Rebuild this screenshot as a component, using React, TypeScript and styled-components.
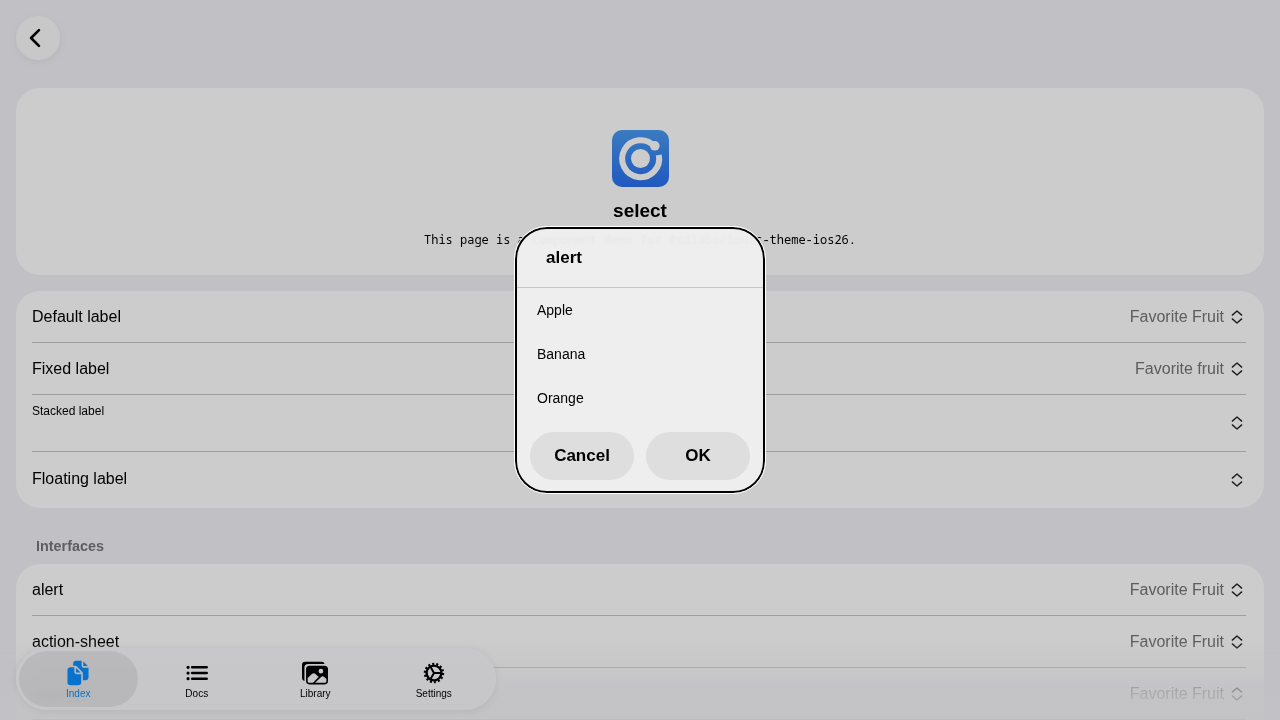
import * as React from 'react';
import styled, { createGlobalStyle } from 'styled-components';
import { IoChevronBack, IoDocuments, IoImages, IoList } from 'react-icons/io5';

const GlobalStyle = createGlobalStyle`
  html, body {
    margin: 0;
    height: 100%;
    overflow: hidden;
    background: #f2f2f7;
    font-family: "Liberation Sans", Arial, sans-serif;
    color: #000;
  }
`;

const Page = styled.div`
  height: 720px;
  overflow: hidden;
  box-sizing: border-box;
  padding: 16px 16px 0 16px;
  display: flex;
  flex-direction: column;
  will-change: transform;
`;

const BackButton = styled.button`
  width: 44px;
  height: 44px;
  flex: none;
  padding: 0 7px 0 0;
  border: none;
  border-radius: 50%;
  background: #fafafc;
  color: #000;
  display: flex;
  align-items: center;
  justify-content: center;
  box-shadow: 0 2px 8px rgba(0, 0, 0, 0.06);
`;

const Card = styled.section`
  flex: none;
  background: #fff;
  border-radius: 24px;
`;

const Hero = styled(Card)`
  margin-top: 28px;
  height: 187px;
  box-sizing: border-box;
  padding-top: 42px;
  display: flex;
  flex-direction: column;
  align-items: center;
`;

const LogoBox = styled.div`
  width: 57px;
  height: 57px;
  border-radius: 10px;
  background: linear-gradient(180deg, #4a9af0 0%, #2870f0 100%);
`;

const LogoSvg = styled.svg`
  display: block;
  width: 57px;
  height: 57px;
`;

const IonicLogo = () => (
  <LogoSvg viewBox="0 0 57 57">
    <path d="M42.5 16.4A18.5 18.5 0 1 0 46.8 25" fill="none" stroke="#fff" strokeWidth="6" />
    <circle cx="28.5" cy="28.5" r="9.5" fill="#fff" />
    <circle cx="42.8" cy="15.8" r="4.8" fill="#fff" />
  </LogoSvg>
);

const Title = styled.h1`
  margin: 13px 0 0;
  font-size: 19px;
  line-height: 22px;
  font-weight: 700;
`;

const Description = styled.p`
  margin: 11px 0 0;
  font-family: "Noto Sans Mono", "DejaVu Sans Mono", monospace;
  font-size: 12px;
  line-height: 14px;
`;

const List = styled(Card)`
  margin-top: 16px;
  padding-left: 16px;
`;

const Row = styled.div<{ $height?: number; $last?: boolean }>`
  height: ${p => p.$height ?? 52}px;
  margin-right: 18px;
  box-sizing: border-box;
  display: flex;
  align-items: center;
  font-size: 16px;
  border-bottom: ${p => (p.$last ? 'none' : '1px solid #c6c6c8')};
`;

const StackedRow = styled(Row)`
  align-items: flex-start;
`;

const StackedLabel = styled.span`
  display: block;
  font-size: 12px;
  line-height: 14px;
  margin-top: 9px;
`;

const Label = styled.span<{ $lift?: number }>`
  flex: 1;
  margin-bottom: ${p => p.$lift ?? 0}px;
`;

const Value = styled.span`
  color: #757575;
`;

const ChevronSvg = styled.svg<{ $top?: number }>`
  width: 20px;
  height: 20px;
  margin: ${p => p.$top ?? 0}px -1px 0 3px;
  flex: none;
  fill: none;
  color: #222;
  stroke: currentColor;
  stroke-width: 34px;
  stroke-linecap: round;
  stroke-linejoin: round;
`;

const Chevron = ({ top }: { top?: number }) => (
  <ChevronSvg viewBox="0 0 512 512" $top={top}>
    <path d="M136 208l120-104 120 104" />
    <path d="M136 304l120 104 120-104" />
  </ChevronSvg>
);

const SectionHeader = styled.h2`
  margin: 30px 0 0;
  padding-left: 20px;
  font-size: 14.4px;
  line-height: 16px;
  font-weight: 700;
  color: #76757b;
`;

const SecondList = styled(List)`
  margin-top: 10px;
`;

const BottomFade = styled.div`
  position: fixed;
  left: 0;
  right: 0;
  bottom: 0;
  height: 80px;
  background: linear-gradient(180deg, rgba(242, 242, 247, 0) 0%, rgba(242, 242, 247, 0.8) 70%, rgba(242, 242, 247, 0.85) 100%);
`;

const TabBar = styled.nav`
  position: fixed;
  left: 16px;
  bottom: 10px;
  width: 480px;
  height: 62px;
  box-sizing: border-box;
  padding: 3px;
  border-radius: 31px;
  background: rgba(250, 250, 252, 0.75);
  backdrop-filter: blur(6px);
  box-shadow: 0 1px 8px rgba(0, 0, 0, 0.08);
  display: grid;
  grid-template-columns: repeat(4, 1fr);
`;

const Tab = styled.a<{ $active?: boolean }>`
  border-radius: 28px;
  background: ${p => (p.$active ? 'rgba(0, 0, 0, 0.07)' : 'transparent')};
  color: ${p => (p.$active ? '#0a90ff' : '#000')};
  display: flex;
  flex-direction: column;
  align-items: center;
  padding-top: 9px;
  box-sizing: border-box;
  font-size: 10px;
  line-height: 12px;
  svg {
    width: 26px;
    height: 26px;
    margin-bottom: 2px;
  }
`;

const SettingsIcon = () => (
  <svg viewBox="0 0 26 26" fill="none" stroke="currentColor">
    <circle cx="13" cy="13" r="7.4" strokeWidth="2.4" />
    <circle cx="13" cy="13" r="9.1" strokeWidth="2.2" strokeDasharray="2.04 2.04" />
    <path d="M13 13H20.4M13 13L9.3 6.6M13 13L9.3 19.4" strokeWidth="2" />
  </svg>
);

const Backdrop = styled.div`
  position: fixed;
  inset: 0;
  background: rgba(0, 0, 0, 0.2);
`;

const Alert = styled.div`
  position: fixed;
  left: 515px;
  top: 227px;
  width: 250px;
  height: 266px;
  box-sizing: border-box;
  border: 2px solid #000;
  outline: 1px solid #fff;
  border-radius: 32px;
  background: rgba(239, 239, 239, 0.96);
  backdrop-filter: blur(1px);
  display: flex;
  flex-direction: column;
`;

const AlertTitle = styled.h3`
  margin: 0;
  height: 59px;
  box-sizing: border-box;
  padding: 19px 0 0 29px;
  font-size: 17px;
  line-height: 20px;
  font-weight: 700;
  border-bottom: 1px solid #c6c6c8;
`;

const Option = styled.div`
  height: 44px;
  flex: none;
  padding-left: 20px;
  display: flex;
  align-items: center;
  font-size: 14px;
`;

const Buttons = styled.div`
  display: grid;
  grid-template-columns: 104px 104px;
  gap: 12px;
  padding: 12px 13px 0;
`;

const AlertButton = styled.button`
  height: 48px;
  border: none;
  border-radius: 24px;
  background: #dedede;
  color: #000;
  font-family: inherit;
  font-size: 17px;
  font-weight: 700;
  padding: 0;
`;

const firstRows = [
  { label: 'Default label', value: 'Favorite Fruit' },
  { label: 'Fixed label', value: 'Favorite fruit' },
];

const interfaces = ['alert', 'action-sheet', 'popover', 'modal'];

const tabs = [
  { label: 'Index', icon: IoDocuments, active: true },
  { label: 'Docs', icon: IoList },
  { label: 'Library', icon: IoImages },
  { label: 'Settings', icon: SettingsIcon },
];

export default function App() {
  return (
    <>
      <GlobalStyle />
      <Page>
        <BackButton aria-label="Back">
          <IoChevronBack size={28} />
        </BackButton>
        <Hero>
          <LogoBox>
            <IonicLogo />
          </LogoBox>
          <Title>select</Title>
          <Description>This page is a component demo for @rdlabo/ionic-theme-ios26.</Description>
        </Hero>
        <List>
          {firstRows.map(r => (
            <Row key={r.label}>
              <Label>{r.label}</Label>
              <Value>{r.value}</Value>
              <Chevron />
            </Row>
          ))}
          <StackedRow $height={57}>
            <Label>
              <StackedLabel>Stacked label</StackedLabel>
            </Label>
            <Chevron top={18} />
          </StackedRow>
          <Row $height={56} $last>
            <Label $lift={2}>Floating label</Label>
            <Chevron />
          </Row>
        </List>
        <SectionHeader>Interfaces</SectionHeader>
        <SecondList>
          {interfaces.map(name => (
            <Row key={name}>
              <Label>{name}</Label>
              <Value>Favorite Fruit</Value>
              <Chevron />
            </Row>
          ))}
        </SecondList>
      </Page>
      <BottomFade />
      <TabBar>
        {tabs.map(t => (
          <Tab key={t.label} $active={t.active}>
            <t.icon />
            {t.label}
          </Tab>
        ))}
      </TabBar>
      <Backdrop />
      <Alert>
        <AlertTitle>alert</AlertTitle>
        <Option>Apple</Option>
        <Option>Banana</Option>
        <Option>Orange</Option>
        <Buttons>
          <AlertButton>Cancel</AlertButton>
          <AlertButton>OK</AlertButton>
        </Buttons>
      </Alert>
    </>
  );
}
